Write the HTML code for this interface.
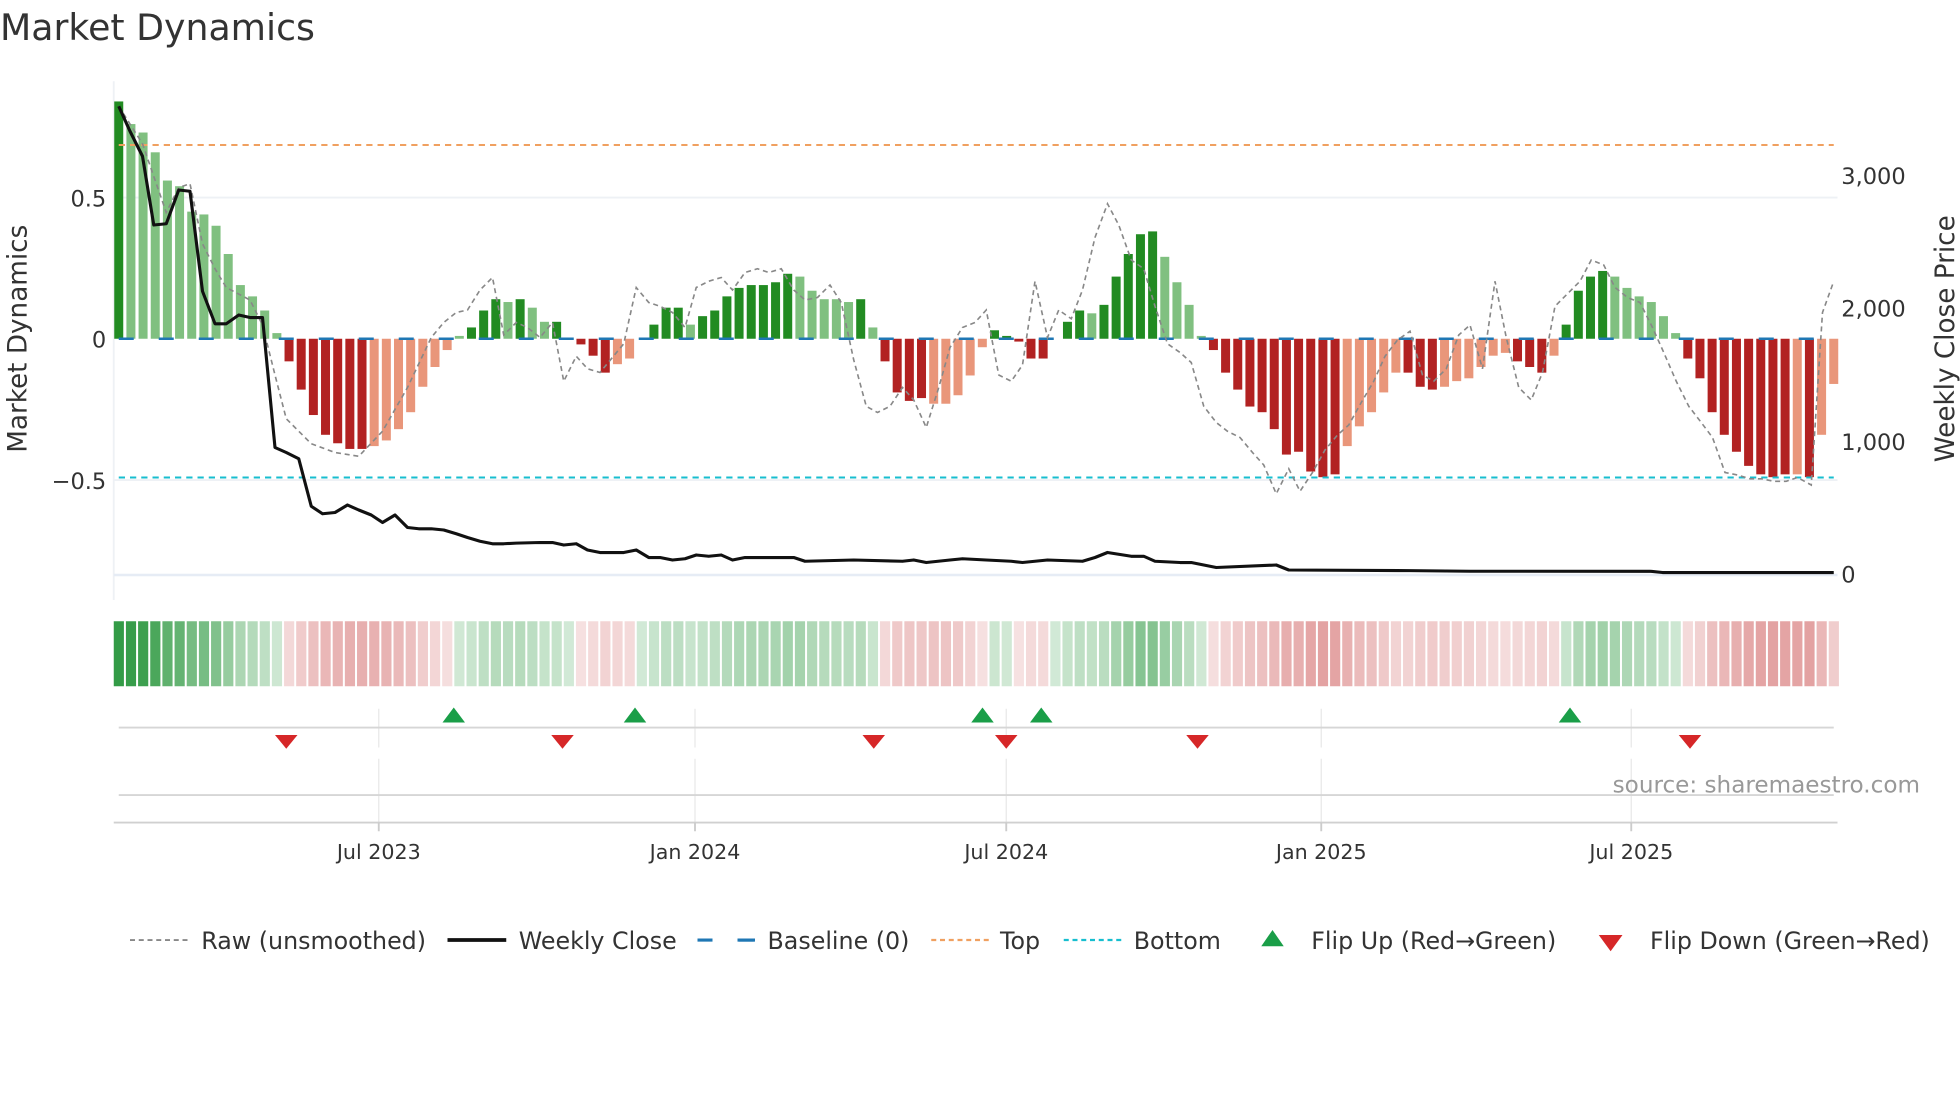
<!DOCTYPE html>
<html><head><meta charset="utf-8"><style>
html,body{margin:0;padding:0;background:#fff;width:1960px;height:1102px;overflow:hidden}
svg{display:block}
text{font-family:"DejaVu Sans","Liberation Sans",sans-serif;fill:#333}
</style></head><body>
<svg id="s" width="1960" height="1102" viewBox="0 0 1568 881.6" xmlns="http://www.w3.org/2000/svg">
<text x="0" y="32" font-size="29">Market Dynamics</text>
<line x1="91" y1="65" x2="91" y2="480" stroke="#eef1f5" stroke-width="1.5"/>
<line x1="91" y1="158" x2="1470" y2="158" stroke="#eef1f5" stroke-width="1.5"/>
<line x1="91" y1="384" x2="1470" y2="384" stroke="#eef1f5" stroke-width="1.5"/>
<line x1="91" y1="460" x2="1470" y2="460" stroke="#e6ecf5" stroke-width="2"/>
<g id="bars"></g>
<line x1="95" y1="116" x2="1467" y2="116" stroke="#f0a060" stroke-width="1.6" stroke-dasharray="5,4"/>
<line x1="95" y1="382" x2="1467" y2="382" stroke="#17becf" stroke-width="1.6" stroke-dasharray="5,4"/>
<line x1="95" y1="271" x2="1467" y2="271" stroke="#1f77b4" stroke-width="2" stroke-dasharray="12,20"/>
<polyline id="raw" fill="none" stroke="#888" stroke-width="1.3" stroke-dasharray="4,3"/>
<polyline id="close" fill="none" stroke="#111" stroke-width="2.5" stroke-linejoin="round"/>
<text x="85" y="165" font-size="18" text-anchor="end">0.5</text>
<text x="85" y="278" font-size="18" text-anchor="end">0</text>
<text x="85" y="391" font-size="18" text-anchor="end">−0.5</text>
<text x="1473" y="147" font-size="18">3,000</text>
<text x="1473" y="253" font-size="18">2,000</text>
<text x="1473" y="360" font-size="18">1,000</text>
<text x="1473" y="466" font-size="18">0</text>
<text transform="translate(21,271) rotate(-90)" font-size="21" text-anchor="middle">Market Dynamics</text>
<text transform="translate(1563,271) rotate(-90)" font-size="21" text-anchor="middle">Weekly Close Price</text>
<g id="heat"></g>
<g stroke="#e8e8e8" stroke-width="1">
<line x1="303" y1="567" x2="303" y2="598"/><line x1="556" y1="567" x2="556" y2="598"/><line x1="805" y1="567" x2="805" y2="598"/><line x1="1057" y1="567" x2="1057" y2="598"/><line x1="1305" y1="567" x2="1305" y2="598"/>
<line x1="303" y1="607" x2="303" y2="658"/><line x1="556" y1="607" x2="556" y2="658"/><line x1="805" y1="607" x2="805" y2="658"/><line x1="1057" y1="607" x2="1057" y2="658"/><line x1="1305" y1="607" x2="1305" y2="658"/>
</g>
<line x1="95" y1="582" x2="1467" y2="582" stroke="#d6d6d6" stroke-width="1.5"/>
<line x1="95" y1="636" x2="1467" y2="636" stroke="#d6d6d6" stroke-width="1.5"/>
<line x1="91" y1="658" x2="1470" y2="658" stroke="#d0d0d0" stroke-width="1.5"/>
<g stroke="#ccc" stroke-width="1.5"><line x1="303" y1="658" x2="303" y2="665"/><line x1="556" y1="658" x2="556" y2="665"/><line x1="805" y1="658" x2="805" y2="665"/><line x1="1057" y1="658" x2="1057" y2="665"/><line x1="1305" y1="658" x2="1305" y2="665"/></g>
<g id="flips"></g>
<text x="1536" y="634" font-size="18.5" text-anchor="end" style="fill:#999">source: sharemaestro.com</text>
<g font-size="16.5" text-anchor="middle">
<text x="303" y="687">Jul 2023</text><text x="556" y="687">Jan 2024</text><text x="805" y="687">Jul 2024</text><text x="1057" y="687">Jan 2025</text><text x="1305" y="687">Jul 2025</text>
</g>
<g font-size="19">
<line x1="104" y1="752" x2="150" y2="752" stroke="#888" stroke-width="1.5" stroke-dasharray="4,3"/>
<text x="161" y="759">Raw (unsmoothed)</text>
<line x1="358" y1="752" x2="405" y2="752" stroke="#111" stroke-width="3"/>
<text x="415" y="759">Weekly Close</text>
<line x1="558" y1="752" x2="604" y2="752" stroke="#1f77b4" stroke-width="2.5" stroke-dasharray="12,21"/>
<line x1="590" y1="752" x2="604" y2="752" stroke="#1f77b4" stroke-width="2.5"/>
<text x="614" y="759">Baseline (0)</text>
<line x1="745" y1="752" x2="791" y2="752" stroke="#f0a060" stroke-width="1.8" stroke-dasharray="4,3"/>
<text x="800" y="759">Top</text>
<line x1="851" y1="752" x2="897" y2="752" stroke="#17becf" stroke-width="1.8" stroke-dasharray="4,3"/>
<text x="907" y="759">Bottom</text>
<polygon points="1018,744 1027,757 1009,757" fill="#1a9e48"/>
<text x="1049" y="759">Flip Up (Red→Green)</text>
<polygon points="1279,748 1298,748 1288.5,761" fill="#d62728"/>
<text x="1320" y="759">Flip Down (Green→Red)</text>
</g>
</svg>
<script>
const NS="http://www.w3.org/2000/svg";
function el(t,a,p){const e=document.createElementNS(NS,t);for(const k in a)e.setAttribute(k,a[k]);p.appendChild(e);return e;}
const V=[[.84,1],[.76,0],[.73,0],[.66,0],[.56,0],[.54,0],[.45,0],[.44,0],[.40,0],[.30,0],[.19,0],[.15,0],[.10,0],[.02,0],
[-.08,1],[-.18,1],[-.27,1],[-.34,1],[-.37,1],[-.39,1],[-.39,1],[-.38,0],[-.36,0],[-.32,0],[-.26,0],[-.17,0],[-.10,0],[-.04,0],
[.01,0],[.04,1],[.10,1],[.14,1],[.13,0],[.14,1],[.11,0],[.06,0],[.06,1],[0,0],[-.02,1],[-.06,1],[-.12,1],[-.09,0],[-.07,0],[0,0],
[.05,1],[.11,1],[.11,1],[.05,0],[.08,1],[.10,1],[.15,1],[.18,1],[.19,1],[.19,1],[.20,1],[.23,1],[.22,0],[.17,0],[.14,0],[.14,0],[.13,0],[.14,1],[.04,0],
[-.08,1],[-.19,1],[-.22,1],[-.21,1],[-.23,0],[-.23,0],[-.20,0],[-.13,0],[-.03,0],[.03,1],[.01,1],[-.01,1],[-.07,1],[-.07,1],[0,0],
[.06,1],[.10,1],[.09,0],[.12,1],[.22,1],[.30,1],[.37,1],[.38,1],[.29,0],[.20,0],[.12,0],[.01,0],
[-.04,1],[-.12,1],[-.18,1],[-.24,1],[-.26,1],[-.32,1],[-.41,1],[-.40,1],[-.47,1],[-.49,1],[-.48,1],[-.38,0],[-.31,0],[-.26,0],[-.19,0],[-.12,0],
[-.12,1],[-.17,1],[-.18,1],[-.17,0],[-.15,0],[-.14,0],[-.10,0],[-.06,0],[-.05,0],[-.08,1],[-.10,1],[-.12,1],[-.06,0],
[.05,1],[.17,1],[.22,1],[.24,1],[.22,0],[.18,0],[.15,0],[.13,0],[.08,0],[.02,0],
[-.07,1],[-.14,1],[-.26,1],[-.34,1],[-.40,1],[-.45,1],[-.48,1],[-.49,1],[-.48,1],[-.48,0],[-.49,1],[-.34,0],[-.16,0]];
const n=V.length, step=(1467-95)/(n-1);
const bars=document.getElementById('bars'), heat=document.getElementById('heat');
V.forEach(([v,d],i)=>{
 const x=95+i*step, h=Math.abs(v)*226;
 const col=v>=0?(d?'#228b22':'#80c080'):(d?'#b22222':'#e9967a');
 if(h>0.5) el('rect',{x:x-3.6,y:v>=0?271-h:271,width:7.2,height:h,fill:col},bars);
 const a=Math.min(1,0.22+Math.abs(v)*1.0);
 const hc=v>=0?'rgb(40,150,60)':'rgb(200,70,70)';
 el('rect',{x:x-4,y:497,width:step-1.6,height:52,fill:hc,'fill-opacity':(v>=0?a*0.95:a*0.7).toFixed(2)},heat);
});
const CL=[[95,85],[104,105],[114,125],[123,180],[133,179],[143,152],[152,153],[162,233],[172,259],[181,259],[191,252],[200,254],[210,254],[220,358],[229,362],[239,367],[249,405],[258,411],[268,410],[278,404],[287,408],[297,412],[306,418],[316,412],[326,422],[335,423],[345,423],[355,424],[365,427],[374,430],[384,433],[394,435],[403,435],[413,434.5],[432,434],[442,434],[451,436],[461,435],[470,440],[480,442],[490,442],[499,442],[509,440],[519,446],[528,446],[538,448],[548,447],[557,444],[567,445],[577,444],[586,448],[596,446],[635,446],[644,449],[683,448],[722,449],[731,448],[741,450],[760,448],[770,447],[789,448],[809,449],[818,450],[838,448],[866,449],[876,446],[886,442],[905,445],[915,445],[924,449],[944,450],[953,450],[963,452],[973,454],[1021,452],[1031,456],[1128,456.5],[1176,457],[1320,457],[1330,458],[1467,458]];
document.getElementById('close').setAttribute('points',CL.map(p=>p.join(',')).join(' '));
const RW=[[95,85],[114,115],[133,170],[143,150],[152,147],[162,195],[172,215],[181,230],[200,240],[210,260],[220,300],[229,335],[239,345],[249,355],[268,362],[287,365],[306,345],[326,310],[345,270],[355,258],[365,250],[374,248],[384,232],[394,222],[403,268],[413,258],[422,262],[432,270],[442,258],[451,305],[461,285],[470,295],[480,298],[499,275],[509,230],[519,242],[528,245],[538,250],[548,262],[557,230],[567,225],[577,222],[586,232],[596,218],[606,215],[615,218],[625,215],[635,232],[644,240],[654,238],[664,228],[673,242],[683,288],[693,325],[702,330],[712,325],[722,310],[731,320],[741,342],[751,310],[760,278],[770,262],[780,258],[789,248],[799,300],[809,305],[818,292],[828,225],[838,270],[847,248],[857,255],[866,232],[876,190],[886,163],[895,180],[905,208],[915,215],[924,245],[934,275],[944,282],[953,290],[963,325],[973,338],[982,345],[992,350],[1002,362],[1011,372],[1021,395],[1031,375],[1040,393],[1050,378],[1060,360],[1070,348],[1079,340],[1089,322],[1099,305],[1108,285],[1118,272],[1128,265],[1138,300],[1147,305],[1157,295],[1167,268],[1176,260],[1186,295],[1196,225],[1205,270],[1215,310],[1225,320],[1234,298],[1244,245],[1254,235],[1264,225],[1273,208],[1283,212],[1292,230],[1302,238],[1312,242],[1322,262],[1331,282],[1341,305],[1351,325],[1361,338],[1370,350],[1380,378],[1390,380],[1400,383],[1409,383],[1419,385],[1429,385],[1438,382],[1449,388],[1458,250],[1467,225]];
document.getElementById('raw').setAttribute('points',RW.map(p=>p.join(',')).join(' '));
const fl=document.getElementById('flips');
[363,508,786,833,1256].forEach(x=>el('polygon',{points:`${x},566 ${x+9},578 ${x-9},578`,fill:'#1a9e48'},fl));
[229,450,699,805,958,1352].forEach(x=>el('polygon',{points:`${x-9},588 ${x+9},588 ${x},599`,fill:'#d62728'},fl));
</script>
</body></html>
